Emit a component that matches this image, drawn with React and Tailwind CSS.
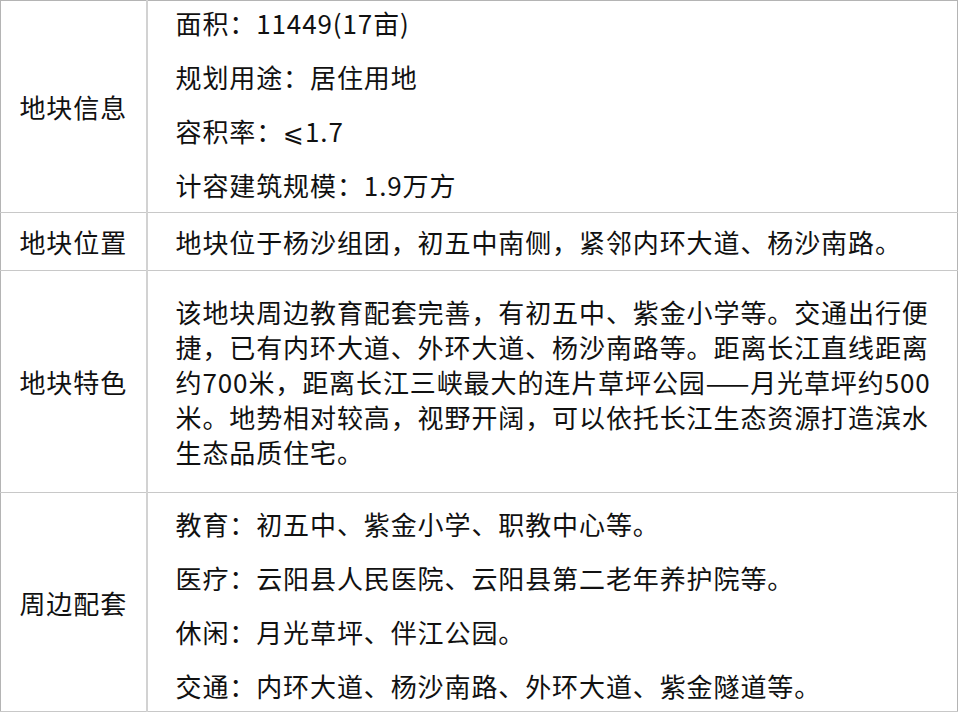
export default function App() {
  const rows = [
    {
      label: "地块信息",
      lines: [
        "面积：11449(17亩)",
        "规划用途：居住用地",
        <>
          容积率：<span className="font-['DejaVu_Sans',sans-serif] text-[25px] leading-none">⩽</span>1.7
        </>,
        "计容建筑规模：1.9万方",
      ],
      spaced: true,
      pad: "pt-[4px] pb-[10px]",
    },
    {
      label: "地块位置",
      lines: ["地块位于杨沙组团，初五中南侧，紧邻内环大道、杨沙南路。"],
      pad: "py-[11px]",
    },
    {
      label: "地块特色",
      lines: [
        "该地块周边教育配套完善，有初五中、紫金小学等。交通出行便",
        "捷，已有内环大道、外环大道、杨沙南路等。距离长江直线距离",
        "约700米，距离长江三峡最大的连片草坪公园——月光草坪约500",
        "米。地势相对较高，视野开阔，可以依托长江生态资源打造滨水",
        "生态品质住宅。",
      ],
      pad: "py-[23px]",
    },
    {
      label: "周边配套",
      lines: [
        "教育：初五中、紫金小学、职教中心等。",
        "医疗：云阳县人民医院、云阳县第二老年养护院等。",
        "休闲：月光草坪、伴江公园。",
        "交通：内环大道、杨沙南路、外环大道、紫金隧道等。",
      ],
      spaced: true,
      pad: "pt-[13px] pb-[8px]",
    },
  ];

  return (
    <div className="w-[960px] h-[714px] bg-white font-['Noto_Sans_CJK_SC',sans-serif] text-[26px] tracking-[0.9px] text-[#111111]">
      <table className="w-[958px] border-collapse border border-[#b4b4b4]">
        <tbody>
          {rows.map((r) => (
            <tr key={r.label} className="border-b border-[#c8c8c8]">
              <td className="w-[146px] text-center align-middle border-r-2 border-[#d2d2d2] leading-[35px]">
                {r.label}
              </td>
              <td className={`pl-[28px] pr-[4px] align-middle leading-[35px] ${r.pad}`}>
                <div className={r.spaced ? "flex flex-col gap-[19px]" : "flex flex-col"}>
                  {r.lines.map((l, i) => (
                    <div key={i} className="whitespace-nowrap h-[35px]">
                      {l}
                    </div>
                  ))}
                </div>
              </td>
            </tr>
          ))}
        </tbody>
      </table>
    </div>
  );
}
